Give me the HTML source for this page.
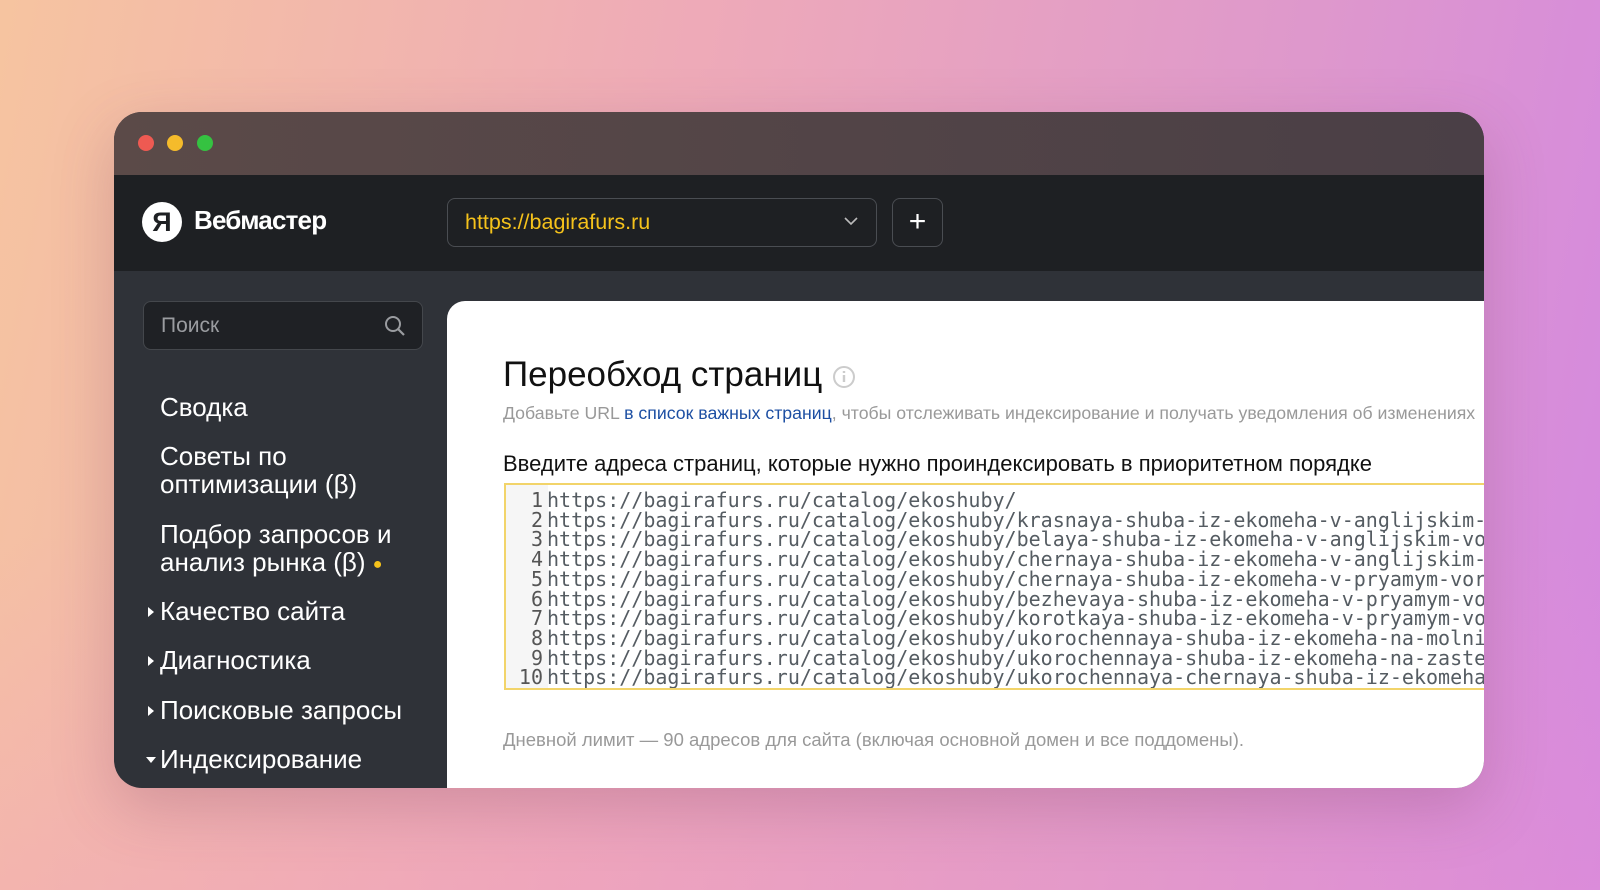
<!DOCTYPE html>
<html><head><meta charset="utf-8"><style>
*{margin:0;padding:0;box-sizing:border-box}
body{width:1600px;height:890px;overflow:hidden;position:relative;font-family:"Liberation Sans","DejaVu Sans",sans-serif;
background:linear-gradient(100deg,#f6c4a0 0%,#eeaab8 40%,#de98cc 75%,#d488e0 100%);}
.bg2{position:absolute;inset:0;background:linear-gradient(180deg,rgba(255,255,255,0) 60%,rgba(240,150,200,.25) 100%)}
.win{position:absolute;left:114px;top:112px;width:1370px;height:676px;border-radius:28px;overflow:hidden;background:#2f3238;box-shadow:0 20px 60px rgba(120,60,90,.25)}
.tb{position:absolute;left:0;top:0;right:0;height:63px;background:linear-gradient(90deg,#5b4a48,#4a3f46)}
.dot{position:absolute;top:23px;width:16px;height:16px;border-radius:50%}
.hd{position:absolute;left:0;top:63px;right:0;height:96px;background:#1e2023}
.logo{position:absolute;left:28px;top:27px;width:40px;height:40px;border-radius:50%;background:#fff;color:#1e2023;font-weight:bold;font-size:27px;text-align:center;line-height:40px}
.brand{position:absolute;left:80px;top:30px;color:#fff;font-size:26px;font-weight:bold;letter-spacing:-.8px}
.sel{position:absolute;left:333px;top:23px;width:430px;height:49px;border:1.5px solid #4a4d52;border-radius:8px;color:#f5c21b;font-size:21.5px;padding:11px 0 0 17px}
.plus{position:absolute;left:778px;top:23px;width:51px;height:49px;border:1.5px solid #4a4d52;border-radius:8px;color:#fff;font-size:30px;text-align:center;line-height:45px}
.srch{position:absolute;left:29px;top:189px;width:280px;height:49px;background:#1f2125;border:1.5px solid #44474c;border-radius:8px;color:#9a9ca0;font-size:21px;padding:12px 0 0 17px}
.nav{position:absolute;left:46px;color:#fff;font-size:26px;line-height:28px}
.tri{position:absolute;left:-12px;top:10px;width:0;height:0;border-top:5px solid transparent;border-bottom:5px solid transparent;border-left:6px solid #fff}
.tri.d{border-left:5px solid transparent;border-right:5px solid transparent;border-top:6px solid #fff;border-bottom:0;top:12px;left:-14px}
.card{position:absolute;left:333px;top:189px;right:0;bottom:0;background:#fff;border-top-left-radius:18px}
.h1{position:absolute;left:56px;top:54px;font-size:35px;color:#111;white-space:nowrap}
.sub{position:absolute;left:56px;top:102px;font-size:17.7px;color:#999;white-space:nowrap}
.lbl{position:absolute;left:56px;top:150px;font-size:22px;color:#111;white-space:nowrap}
.ta{position:absolute;left:57px;top:182px;right:0;height:207px;border:2px solid #f2d46a;border-right:0;overflow:hidden;font-family:"DejaVu Sans Mono","Liberation Mono",monospace;font-size:20px;line-height:19.7px;color:#555c62;white-space:pre;padding-top:6px}
.gut{position:absolute;left:0;top:0;bottom:0;width:42px;background:#f6f6f6}
.ln{position:relative}
.ln b{font-weight:normal;display:inline-block;width:37px;margin-right:4px;text-align:right;color:#555}
.foot{position:absolute;left:56px;top:428px;font-size:18.5px;color:#999;white-space:nowrap}
</style></head><body><div class="bg2"></div>
<div class="win">
<div class="tb"><div class="dot" style="left:24px;background:#ee5a52"></div><div class="dot" style="left:53px;background:#f5bb2b"></div><div class="dot" style="left:83px;background:#35c241"></div></div>
<div class="hd"><div class="logo">Я</div><div class="brand">Вебмастер</div>
<div class="sel">https://bagirafurs.ru<svg style="position:absolute;right:18px;top:18px" width="14" height="9" viewBox="0 0 14 9"><path d="M1 1l6 6 6-6" fill="none" stroke="#bbb" stroke-width="1.6"/></svg></div>
<div class="plus">+</div></div>
<div class="srch">Поиск<svg style="position:absolute;right:16px;top:13px" width="22" height="22" viewBox="0 0 22 22"><circle cx="9" cy="9" r="7" fill="none" stroke="#9a9ca0" stroke-width="2"/><path d="M14 14l6 6" stroke="#9a9ca0" stroke-width="2.2"/></svg></div>
<div class="nav" style="top:281px">Сводка</div>
<div class="nav" style="top:330px">Советы по<br>оптимизации (β)</div>
<div class="nav" style="top:408px">Подбор запросов и<br>анализ рынка (β) <span style="color:#f5c21b;font-size:16px;vertical-align:2px">●</span></div>
<div class="nav" style="top:485px"><i class="tri"></i>Качество сайта</div>
<div class="nav" style="top:534px"><i class="tri"></i>Диагностика</div>
<div class="nav" style="top:584px"><i class="tri"></i>Поисковые запросы</div>
<div class="nav" style="top:633px"><i class="tri d"></i>Индексирование</div>
<div class="card">
<div class="h1">Переобход страниц <svg width="24" height="24" viewBox="0 0 24 24" style="vertical-align:-3px"><circle cx="12" cy="12" r="10" fill="none" stroke="#ccc" stroke-width="2"/><path d="M12 10v7M12 6v2" stroke="#ccc" stroke-width="2.4"/></svg></div>
<div class="sub">Добавьте URL <span style="color:#1d4fa3">в список важных страниц</span>, чтобы отслеживать индексирование и получать уведомления об изменениях</div>
<div class="lbl">Введите адреса страниц, которые нужно проиндексировать в приоритетном порядке</div>
<div class="ta"><div class="gut"></div><div class="ln"><b>1</b>https://bagirafurs.ru/catalog/ekoshuby/</div><div class="ln"><b>2</b>https://bagirafurs.ru/catalog/ekoshuby/krasnaya-shuba-iz-ekomeha-v-anglijskim-stile/</div><div class="ln"><b>3</b>https://bagirafurs.ru/catalog/ekoshuby/belaya-shuba-iz-ekomeha-v-anglijskim-vorotnikom/</div><div class="ln"><b>4</b>https://bagirafurs.ru/catalog/ekoshuby/chernaya-shuba-iz-ekomeha-v-anglijskim-stile/</div><div class="ln"><b>5</b>https://bagirafurs.ru/catalog/ekoshuby/chernaya-shuba-iz-ekomeha-v-pryamym-vorotnikom/</div><div class="ln"><b>6</b>https://bagirafurs.ru/catalog/ekoshuby/bezhevaya-shuba-iz-ekomeha-v-pryamym-vorotnikom/</div><div class="ln"><b>7</b>https://bagirafurs.ru/catalog/ekoshuby/korotkaya-shuba-iz-ekomeha-v-pryamym-vorotnikom/</div><div class="ln"><b>8</b>https://bagirafurs.ru/catalog/ekoshuby/ukorochennaya-shuba-iz-ekomeha-na-molnii/</div><div class="ln"><b>9</b>https://bagirafurs.ru/catalog/ekoshuby/ukorochennaya-shuba-iz-ekomeha-na-zastezhke/</div><div class="ln"><b>10</b>https://bagirafurs.ru/catalog/ekoshuby/ukorochennaya-chernaya-shuba-iz-ekomeha/</div></div>
<div class="foot">Дневной лимит — 90 адресов для сайта (включая основной домен и все поддомены).</div>
</div></div>
</body></html>
